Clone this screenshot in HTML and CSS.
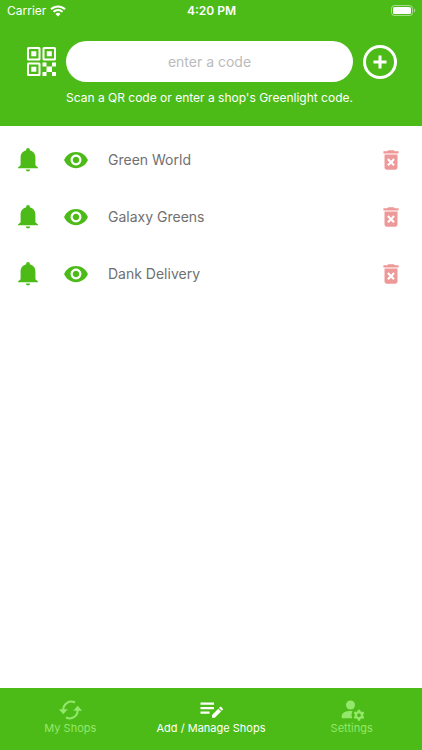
FILE: index.html
```
<!DOCTYPE html>
<html lang="en">
  <head>
    <meta charset="UTF-8" />
    <meta name="viewport" content="width=device-width, initial-scale=1.0" />
    <title>Add / Manage Shops</title>
    <link rel="stylesheet" href="styles.css">
  </head>
  <body>
    <svg class="sprite" aria-hidden="true">
      <symbol id="bell" viewBox="0 0 20 24">
        <path d="M10 0c-1.100 0-1.800.8-1.800 1.800v.4C4.800 3 2.600 5.800 2.600 9.200v8L0 19.400v.9h20v-.9l-2.600-2.200v-8c0-3.400-2.200-6.200-5.600-7v-.4C11.800.8 11.100 0 10 0zM7.800 21.600c.2 1.300 1.100 2 2.200 2s2-.7 2.200-2z" />
      </symbol>
      <symbol id="eye" viewBox="0 0 24 24">
        <path d="M12 4.500C7 4.500 2.730 7.610 1 12c1.730 4.390 6 7.500 11 7.500s9.270-3.110 11-7.500c-1.730-4.390-6-7.500-11-7.500zM12 17c-2.760 0-5-2.240-5-5s2.240-5 5-5 5 2.240 5 5-2.240 5-5 5zm0-8c-1.660 0-3 1.340-3 3s1.340 3 3 3 3-1.340 3-3-1.340-3-3-3z" />
      </symbol>
      <symbol id="trash" viewBox="0 0 24 24">
        <path d="M6 19c0 1.100.9 2 2 2h8c1.100 0 2-.9 2-2V7H6v12zm2.460-7.120l1.410-1.410L12 12.590l2.120-2.120 1.410 1.410L13.410 14l2.120 2.120-1.410 1.410L12 15.410l-2.120 2.120-1.410-1.410L10.590 14l-2.130-2.120zM15.500 4l-1-1h-5l-1 1H5v2h14V4z" />
      </symbol>
    </svg>

    <header class="header">
      <div class="status-bar">
        <div class="carrier">
          <span>Carrier</span>
          <svg class="wifi" viewBox="0 0 16 12">
            <path d="M1 4.300a10 10 0 0 1 14 0" />
            <path d="M3.500 6.900a6.500 6.500 0 0 1 9 0" />
            <path class="wifi-dot" d="M8 11.500L5.500 9a3.600 3.600 0 0 1 5 0z" />
          </svg>
        </div>
        <div class="time">4:20 PM</div>
        <svg class="battery" viewBox="0 0 25 11">
          <rect class="battery-case" x=".5" y=".5" width="21" height="10" rx="3" />
          <rect x="2" y="2" width="18" height="7" rx="1.500" />
          <path class="battery-tip" d="M23 3.500c1.600.4 1.600 3.600 0 4z" />
        </svg>
      </div>

      <form class="code-form">
        <button class="icon-button" type="button" aria-label="Scan a QR code">
          <svg class="qr-icon" viewBox="0 0 29 29">
            <g class="qr-frame">
              <rect x="1" y="1" width="11.500" height="11.500" rx=".5" />
              <rect x="16.500" y="1" width="11.500" height="11.500" rx=".5" />
              <rect x="1" y="16.500" width="11.500" height="11.500" rx=".5" />
            </g>
            <path d="M4.300 4.300h5v5h-5zM19.800 4.300h5v5h-5zM4.300 19.800h5v5h-5zM15.500 15.500h4v4h-4zM25 15.500h4v4h-4zM19.500 19.500H25V25h-5.500zM15.500 25h4v4h-4zM25 25h4v4h-4z" />
          </svg>
        </button>
        <input class="code-input" id="code" type="text" placeholder="enter a code" />
        <button class="icon-button" type="submit" aria-label="Add shop">
          <svg class="add-icon" viewBox="0 0 34 34">
            <circle cx="17" cy="17" r="15.500" />
            <path d="M17 10.500v13M10.500 17h13" />
          </svg>
        </button>
        <label class="hint" for="code">Scan a QR code or enter a shop's Greenlight code.</label>
      </form>
    </header>

    <main class="content">
      <ul class="shop-list">
        <li class="shop">
          <button class="icon-button" aria-label="Notifications"><svg class="bell-icon"><use href="#bell" /></svg></button>
          <button class="icon-button" aria-label="Show"><svg class="eye-icon"><use href="#eye" /></svg></button>
          <span class="shop-name">Green World</span>
          <button class="icon-button" aria-label="Delete"><svg class="trash-icon"><use href="#trash" /></svg></button>
        </li>
        <li class="shop">
          <button class="icon-button" aria-label="Notifications"><svg class="bell-icon"><use href="#bell" /></svg></button>
          <button class="icon-button" aria-label="Show"><svg class="eye-icon"><use href="#eye" /></svg></button>
          <span class="shop-name">Galaxy Greens</span>
          <button class="icon-button" aria-label="Delete"><svg class="trash-icon"><use href="#trash" /></svg></button>
        </li>
        <li class="shop">
          <button class="icon-button" aria-label="Notifications"><svg class="bell-icon"><use href="#bell" /></svg></button>
          <button class="icon-button" aria-label="Show"><svg class="eye-icon"><use href="#eye" /></svg></button>
          <span class="shop-name">Dank Delivery</span>
          <button class="icon-button" aria-label="Delete"><svg class="trash-icon"><use href="#trash" /></svg></button>
        </li>
      </ul>
    </main>

    <nav class="tab-bar">
      <a class="tab" href="#shops">
        <svg class="tab-icon" viewBox="0 0 24 24">
          <g class="sync-arc">
            <path d="M17 4.500C11.500 1.800 5.300 5.500 5.300 12" />
            <path d="M8 19.500c5.500 2.700 11.700-1 11.700-7.500" />
          </g>
          <path d="M.9 11.300h8.800l-4.400 5zM24.100 12.700h-8.800l4.400-5z" />
        </svg>
        <span>My Shops</span>
      </a>
      <a class="tab active" href="#manage">
        <svg class="tab-icon" viewBox="0 0 24 24">
          <path d="M1.500 4.500h13.500v2.300H1.500zM1.500 9h13.500v2.300H1.500zM1.500 13.500h9v2.300h-9zM13 17l6.300-6.300 2.800 2.800-6.300 6.300H13zM20 10l.9-.9c.4-.4 1-.4 1.400 0l1.400 1.400c.4.4.4 1 0 1.400l-.9.9z" />
        </svg>
        <span>Add / Manage Shops</span>
      </a>
      <a class="tab" href="#settings">
        <svg class="tab-icon" viewBox="0 0 24 24">
          <circle cx="10.500" cy="7" r="4.500" />
          <path d="M12.500 13.100c-5-.8-10.800 1.100-10.800 4.900v2.300h10.600a8 8 0 0 1 .2-7.200z" />
          <path transform="translate(.3 -.4) scale(1.100)" d="M20.750 16c0-.22-.03-.42-.06-.63l1.140-1.010-1-1.730-1.450.49c-.32-.27-.68-.48-1.080-.63L18 11h-2l-.3 1.490c-.4.15-.76.36-1.080.63l-1.450-.49-1 1.730 1.140 1.010c-.03.21-.06.41-.06.63s.03.42.06.63l-1.140 1.010 1 1.730 1.450-.49c.32.27.68.48 1.080.63L16 21h2l.3-1.490c.4-.15.76-.36 1.080-.63l1.450.49 1-1.730-1.140-1.010c.03-.21.06-.41.06-.63zM17 17.700c-.95 0-1.700-.75-1.700-1.700s.75-1.700 1.700-1.700 1.700.75 1.700 1.700-.75 1.700-1.700 1.700z" />
        </svg>
        <span>Settings</span>
      </a>
    </nav>
  </body>
</html>
```
FILE: styles.css
```
* {
  margin: 0;
  padding: 0;
  box-sizing: border-box;
}

body {
  display: flex;
  flex-direction: column;
  min-height: 100vh;
  background-color: #fff;
  font-family: Inter, "Liberation Sans", sans-serif;
}

svg {
  display: block;
  fill: currentColor;
  overflow: visible;
}

.sprite {
  position: absolute;
  width: 0;
  height: 0;
}

.icon-button {
  display: flex;
  justify-content: center;
  align-items: center;
  border: none;
  background: none;
  color: inherit;
  cursor: pointer;
}

.header {
  padding-bottom: 20px;
  background-color: #4cbb17;
  color: #fff;
}

.status-bar {
  display: grid;
  grid-template-columns: 1fr auto 1fr;
  align-items: center;
  height: 21px;
  padding: 0 6px 0 7px;
  font-size: 12px;
}

.carrier {
  display: flex;
  align-items: center;
  gap: 4px;
}

.wifi {
  width: 16px;
  height: 12px;
  fill: none;
  stroke: currentColor;
  stroke-width: 2;
}

.wifi-dot {
  fill: currentColor;
  stroke: none;
}

.time {
  font-weight: 600;
}

.battery {
  width: 25px;
  height: 11px;
  justify-self: end;
}

.battery-case {
  fill: none;
  stroke: currentColor;
  opacity: 0.5;
}

.battery-tip {
  opacity: 0.5;
}

.code-form {
  display: grid;
  grid-template-columns: 30px 1fr 34px;
  column-gap: 10px;
  row-gap: 8px;
  align-items: center;
  padding: 20px 25px 0 26px;
}

.qr-icon {
  width: 29px;
  height: 29px;
}

.qr-frame {
  fill: none;
  stroke: currentColor;
  stroke-width: 2;
}

.code-input {
  width: 100%;
  height: 41px;
  border: none;
  border-radius: 21px;
  background-color: #fff;
  color: #666;
  font: inherit;
  font-size: 14px;
  text-align: center;
}

.code-input::placeholder {
  color: #bbb;
  opacity: 1;
}

.add-icon {
  width: 34px;
  height: 34px;
  fill: none;
  stroke: currentColor;
  stroke-width: 3;
}

.hint {
  grid-column: 2;
  font-size: 12px;
  line-height: 16px;
  text-align: center;
  white-space: nowrap;
}

.content {
  flex: 1;
}

.shop-list {
  padding-top: 5px;
  list-style: none;
}

.shop {
  display: grid;
  grid-template-columns: 32px 26px 1fr 26px;
  column-gap: 19px;
  align-items: center;
  height: 57px;
  padding: 0 18px 0 12px;
  color: #4cbb17;
}

.bell-icon {
  width: 20px;
  height: 24px;
}

.eye-icon,
.trash-icon {
  width: 26px;
  height: 26px;
}

.trash-icon {
  color: #ee9999;
}

.shop-name {
  color: #707070;
  font-size: 14px;
  line-height: 20px;
}

.tab-bar {
  display: grid;
  grid-template-columns: repeat(3, 1fr);
  height: 62px;
  padding-top: 10px;
  background-color: #4cbb17;
}

.tab {
  display: flex;
  flex-direction: column;
  align-items: center;
  color: #93e86c;
  font-size: 11px;
  line-height: 12px;
  text-decoration: none;
}

.tab.active {
  color: #fff;
}

.tab-icon {
  width: 24px;
  height: 24px;
}

.sync-arc {
  fill: none;
  stroke: currentColor;
  stroke-width: 2;
}
```
